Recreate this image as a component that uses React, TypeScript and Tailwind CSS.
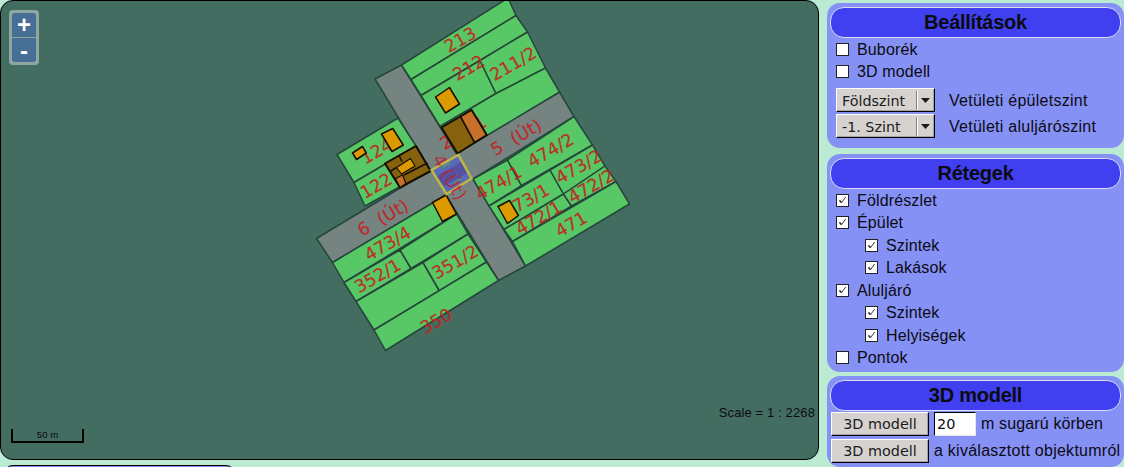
import type { ReactNode } from "react";

const parcels = [
  "401.5,65 508,-2 516,15.5 411,79.5",
  "411,79.5 516,15.5 527.5,32 421,95.5",
  "421,95.5 480,60.5 496,93.5 470,109 440,126.5",
  "480,60.5 527.5,32 545.5,68 496,93.5",
  "440,126.5 496,93.5 545.5,68 559.5,92 456.5,153.5",
  "337,154.5 398,118 416,146 354,182.5",
  "354,182.5 416,146 430,170 365,206",
  "332.5,262.5 446,195 456.5,214 344,282.5",
  "344,282.5 400,250 411,268.5 356,301.5",
  "400,250 456.5,214 468,234 411,268.5",
  "356,301.5 423,262.5 439.5,291 374,330",
  "423,262.5 468,234 486.5,262 439.5,291",
  "374,330 486.5,262 498.5,280.5 385.5,350.5",
  "473,179 507.5,160 521.5,185.5 489,206",
  "507.5,160 574,116.5 592.5,145 521.5,185.5",
  "489,206 550,170 563.5,194 504,229.5",
  "550,170 592.5,145 605,166 563.5,194",
  "504,229.5 563.5,194 571.5,206 512.5,241.5",
  "563.5,194 605,166 616,181.5 571.5,206",
  "512.5,241.5 616,181.5 629.5,204 525.5,266",
];

const labels: [string, number, number][] = [
  ["213", 460, 39.5],
  ["212", 468.5, 67.5],
  ["211/2", 513, 63.5],
  ["211/1", 463, 132.5],
  ["5\u00a0\u00a0(Út)", 516, 137],
  ["474/2", 550.5, 150],
  ["473/2", 578.5, 166.5],
  ["474/1", 498.5, 182.5],
  ["472/2", 591, 186],
  ["473/1", 526, 200.5],
  ["472/1", 538.5, 217.5],
  ["471", 571, 224],
  ["124", 376.5, 151],
  ["122", 376, 185.5],
  ["6\u00a0\u00a0(Út)", 382.8, 217.3],
  ["473/4", 387.5, 243.3],
  ["352/1", 377.5, 275.5],
  ["351/2", 455, 261.7],
  ["350", 436, 320.7],
];

function ParcelMap() {
  return (
    <svg width="817" height="458" viewBox="1 1 817 458" className="block">
      <g stroke="#25463a" strokeWidth="1.5" strokeLinejoin="round">
        <path d="M375,79 L401.5,65 L456.5,153.5 L559.5,92 L574,116.5 L473,179 L525.5,266 L498.5,280.5 L446,195 L332.5,262.5 L316.5,238.5 L430,170Z" fill="#758480" />
        {parcels.map((p) => (
          <polygon key={p} points={p} fill="#58c765" />
        ))}
      </g>
      <g fontFamily="'DejaVu Sans', sans-serif" fontSize="17.4" fill="#c4201d" fillOpacity="0.88" stroke="#c4201d" strokeOpacity="0.5" strokeWidth="0.4" textAnchor="middle">
        {labels.map(([t, x, y]) => (
          <text key={t} transform={`translate(${x} ${y}) rotate(-30)`} y="6.4">{t}</text>
        ))}
      </g>
      <g stroke="#160f00" strokeWidth="1.5" strokeLinejoin="round">
        <g fill="#dc9900">
          <polygon points="435.5,97 449.5,87.5 459.5,104 445.5,113" />
          <polygon points="381.5,134 392.7,128.5 403.3,145 392,151.5" />
          <polygon points="352.5,153 362.5,146.5 366.3,153 356.5,159.5" />
          <polygon points="432.5,202.5 446,195 456.5,214 442.5,221.5" />
          <polygon points="498,206.5 509.5,200.5 518.5,215.5 507.5,223.5" />
        </g>
        <g strokeWidth="2">
          <polygon points="385,163.5 416,146 430.7,171 400,187.5" fill="#86610e" />
          <path d="M399,155.5 L402,161.5 M396.5,167.5 L390,171.5 M404,175 L427.5,163" fill="none" strokeWidth="1.5" />
          <polygon points="395.5,178.5 402.5,175 406,183.5 400,187.5" fill="#c7702c" strokeWidth="1.2" />
          <polygon points="396.5,167.5 410.5,158.5 415,166 401.5,174" fill="#dc9900" strokeWidth="1.2" />
          <polygon points="441.5,127.5 471.5,110 486.7,135 457.5,153.5" fill="#86610e" />
          <polygon points="460.5,116.5 471.5,110 486.7,135 474.5,142.5" fill="#c7702c" strokeWidth="1.6" />
        </g>
      </g>
      <polygon points="431.5,170 458.5,155 471.5,178.5 446.5,194" fill="#596aba" />
      <polygon points="437,176 461,162 467,173 442,187" fill="#5550a0" />
      <g fill="#5d8398" stroke="#506a91" strokeWidth="1">
        <polygon points="441,166 449,161 452,164 444,169" />
        <polygon points="452,182 461,177 463,180 454,186" />
      </g>
      <polygon points="431.5,170 458.5,155 471.5,178.5 446.5,194" fill="none" stroke="#bdb748" strokeWidth="2.5" />
      <text transform="translate(450 177) rotate(60)" y="6.4" textAnchor="middle" fontFamily="'DejaVu Sans', sans-serif" fontSize="17.4" fill="#be1f38" fillOpacity="0.88">{"4\u00a0(Út)"}</text>
    </svg>
  );
}

function Panel({ title, className, children }: { title: string; className: string; children: ReactNode }) {
  return (
    <section className={`rounded-[13px] bg-[#8691f5] px-[3px] pt-1 ${className}`}>
      <h2 className="h-[31px] rounded-[14px] border border-[#dcdcf5] bg-[#4040f0] text-center text-[20px] leading-[29px] font-bold tracking-[-0.25px]">{title}</h2>
      {children}
    </section>
  );
}

function Check({ label, on, nested }: { label: string; on?: boolean; nested?: boolean }) {
  return (
    <label className={`flex h-[22.5px] items-center gap-2 ${nested ? "pl-[35px]" : "pl-[6px]"}`}>
      <span className="h-[13px] w-[13px] shrink-0 border border-[#222] bg-white">
        {on && (
          <svg width="11" height="11" viewBox="0 0 11 11" className="block" fill="none" stroke="#222">
            <path d="M2.5 5.5 L4.5 7.7 L8.7 2" strokeWidth="0.9" />
            <path d="M2.6 5.6 L4.4 7.5" strokeWidth="1.4" />
          </svg>
        )}
      </span>
      <span className="pt-px tracking-[0.14px] whitespace-nowrap">{label}</span>
    </label>
  );
}

function Select({ value, label }: { value: string; label: string }) {
  return (
    <div className="flex h-[24px] items-center pl-[6px]">
      <div className="flex h-[24px] w-[99px] shrink-0 items-center border border-t-white border-r-black border-b-black border-l-white bg-[#d6d2cf] font-['DejaVu_Sans',sans-serif] text-[14.3px] text-[#1c1c1c] shadow-[inset_-1px_-1px_0_#a5a19e]">
        <span className="w-[79px] pt-[2px] pl-[5px] whitespace-nowrap">{value}</span>
        <span className="h-[19px] w-[2px] border-r border-l border-r-white border-l-[#85817e]" />
        <svg width="9" height="5" viewBox="0 0 9 5" className="ml-[3px]">
          <path d="M0 0H9L4.5 5Z" fill="#1c1c1c" />
        </svg>
      </div>
      <span className="ml-[14px] pt-px tracking-[0.26px] whitespace-nowrap">{label}</span>
    </div>
  );
}

function ModelButton() {
  return (
    <button className="h-[24px] w-[98px] shrink-0 border border-t-white border-r-black border-b-black border-l-white bg-[#d6d2cf] font-['DejaVu_Sans',sans-serif] text-[14.4px] leading-[22px] text-[#1c1c1c] shadow-[inset_-1px_-1px_0_#a5a19e]">
      3D modell
    </button>
  );
}

export default function App() {
  return (
    <div className="flex h-[467px] w-[1124px] overflow-hidden bg-[#bcebd3] font-['Liberation_Sans',Arial,sans-serif] text-[16px] leading-[20px] text-[#0b0b12]">
      <main className="flex w-[819px] shrink-0 flex-col gap-[5px]">
        <div className="relative h-[460px] shrink-0 overflow-hidden rounded-[13px] border border-black bg-[#446d62]">
          <ParcelMap />
          <div className="absolute top-[9px] left-[8px] flex w-[30px] flex-col gap-px rounded-[4px] bg-[#8ea8a1] p-[3px] text-center font-bold text-white">
            <button className="h-[24px] rounded-t-[3px] bg-[#476f95] text-[24px] leading-[22px]">+</button>
            <button className="h-[24px] rounded-b-[3px] bg-[#476f95] text-[24px] leading-[19px]">-</button>
          </div>
          <div className="absolute bottom-[16px] left-[10px] h-[14px] w-[73px] border-2 border-t-0 border-black text-center text-[9.6px] leading-[11px]">50 m</div>
          <div className="absolute right-[3px] bottom-[38px] text-[13px] leading-[16px] tracking-[0.12px] whitespace-nowrap">Scale = 1 : 2268</div>
        </div>
        <div className="ml-[3px] h-[24px] w-[233px] shrink-0 rounded-[10px] border border-black bg-[#8691f5]" />
      </main>
      <aside className="ml-[8px] flex w-[297px] shrink-0 flex-col pt-[3px]">
        <Panel title="Beállítások" className="h-[145px] shrink-0">
          <Check label="Buborék" />
          <Check label="3D modell" />
          <div className="mt-[5px] flex flex-col gap-[2px]">
            <Select value="Földszint" label="Vetületi épületszint" />
            <Select value="-1. Szint" label="Vetületi aluljárószint" />
          </div>
        </Panel>
        <Panel title="Rétegek" className="mt-[6px] h-[218px] shrink-0">
          <Check label="Földrészlet" on />
          <Check label="Épület" on />
          <Check label="Szintek" on nested />
          <Check label="Lakások" on nested />
          <Check label="Aluljáró" on />
          <Check label="Szintek" on nested />
          <Check label="Helyiségek" on nested />
          <Check label="Pontok" />
        </Panel>
        <Panel title="3D modell" className="mt-[4px] h-[91px] shrink-0">
          <div className="mt-[1px] flex items-center pl-[1px]">
            <ModelButton />
            <input defaultValue="20" className="ml-[5px] h-[24px] w-[42px] border border-t-black border-r-[#e8e6e4] border-b-[#e8e6e4] border-l-black bg-white pl-[2px] font-['DejaVu_Sans',sans-serif] text-[14.4px] outline-none" />
            <span className="ml-[5px] tracking-[0.14px] whitespace-nowrap">m sugarú körben</span>
          </div>
          <div className="mt-[3px] flex items-center pl-[1px]">
            <ModelButton />
            <span className="ml-[5px] tracking-[0.26px] whitespace-nowrap">a kiválasztott objektumról</span>
          </div>
        </Panel>
      </aside>
    </div>
  );
}
